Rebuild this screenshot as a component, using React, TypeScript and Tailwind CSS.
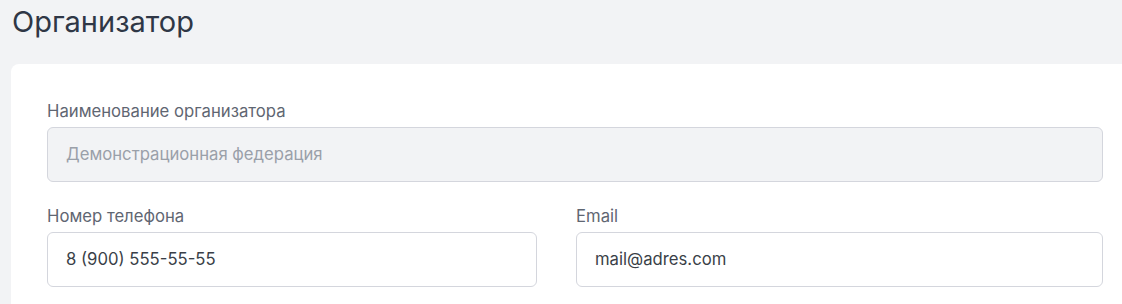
import React from "react";

const Field: React.FC<{ label: string; value: string; disabled?: boolean }> = ({ label, value, disabled }) => {
  return (
    <div className="flex flex-col">
      <label className="text-[16.7px] leading-[22px] text-[#5f6672] mb-[5px]">{label}</label>
      <div
        className={
          "h-[55px] flex items-center px-[18px] rounded-[6px] border border-[#d4d6dd] text-[16.7px] " +
          (disabled ? "bg-[#f2f3f5] text-[#9aa0a9]" : "bg-white text-[#3a3f48]")
        }
      >
        {value}
      </div>
    </div>
  );
}

export default function App() {
  return (
    <div className="w-full h-[304px] overflow-hidden bg-[#f2f3f5] font-['Inter',sans-serif]">
      <div className="w-[1150px] pl-[11px]">
        <h1 className="pl-[1px] pt-[2px] text-[29px] leading-[40px] text-[#2f3746] font-normal">Организатор</h1>
        <div className="mt-[22px] bg-white rounded-tl-[8px] rounded-tr-[8px] px-[36px] pt-[36px] pb-[40px] w-[1128px]">
          <Field label="Наименование организатора" value="Демонстрационная федерация" disabled />
          <div className="grid grid-cols-[490px_1fr] gap-[39px] mt-[23px]">
            <Field label="Номер телефона" value="8 (900) 555-55-55" />
            <Field label="Email" value="mail@adres.com" />
          </div>
        </div>
      </div>
    </div>
  );
}
